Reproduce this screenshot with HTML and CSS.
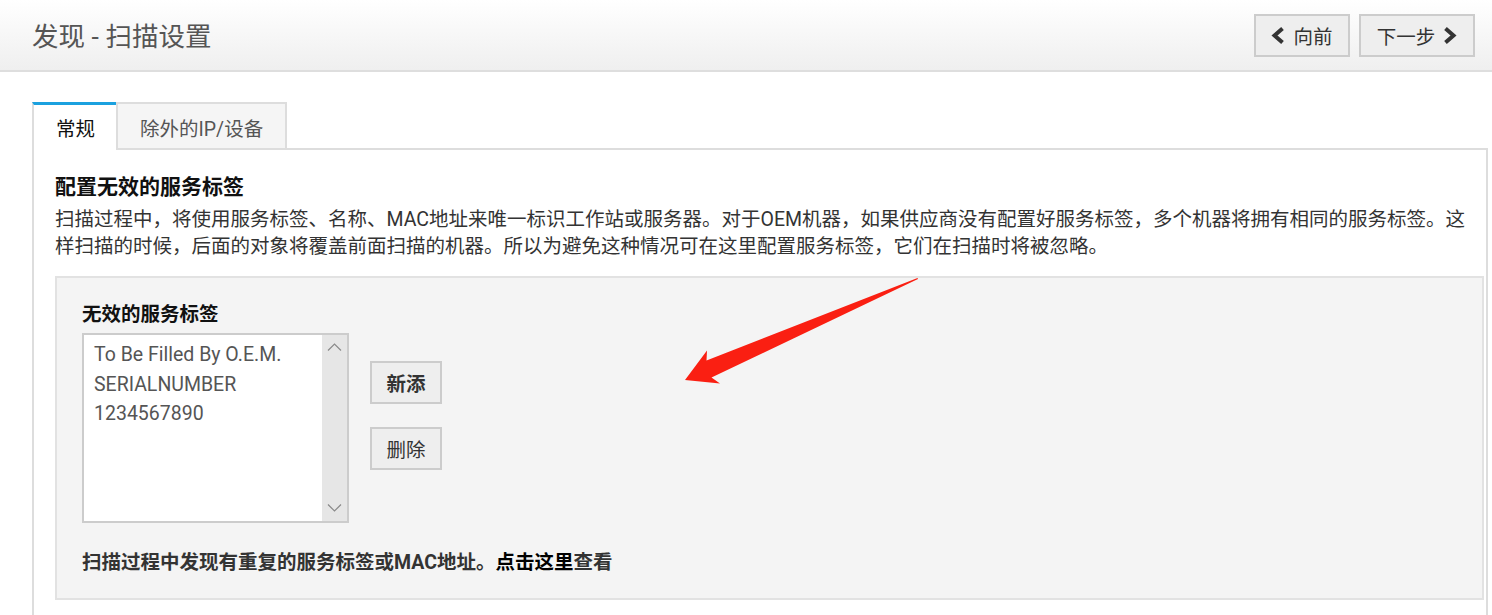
FILE: index.html
```html
<!DOCTYPE html>
<html lang="zh-CN">
<head>
<meta charset="utf-8">
<title>发现 - 扫描设置</title>
<link rel="stylesheet" href="styles.css">
</head>
<body>
<div class="header">
  <h1 class="title">发现 - 扫描设置</h1>
  <div class="nav">
    <button class="btn nav-btn prev"><svg class="chev" width="14" height="17" viewBox="0 0 14 17"><path d="M11.5 1.5 L3.5 8.5 L11.5 15.5" /></svg>向前</button>
    <button class="btn nav-btn next">下一步<svg class="chev" width="14" height="17" viewBox="0 0 14 17"><path d="M2.5 1.5 L10.5 8.5 L2.5 15.5" /></svg></button>
  </div>
</div>

<div class="main">
  <div class="tabs">
    <div class="tab active">常规</div>
    <div class="tab">除外的IP/设备</div>
  </div>
  <div class="panel">
    <h2 class="heading">配置无效的服务标签</h2>
    <p class="desc">扫描过程中，将使用服务标签、名称、MAC地址来唯一标识工作站或服务器。对于OEM机器，如果供应商没有配置好服务标签，多个机器将拥有相同的服务标签。这<br>样扫描的时候，后面的对象将覆盖前面扫描的机器。所以为避免这种情况可在这里配置服务标签，它们在扫描时将被忽略。</p>
    <div class="box">
      <div class="label">无效的服务标签</div>
      <div class="row">
        <div class="listbox">
          <div class="items">
            <div>To Be Filled By O.E.M.</div>
            <div>SERIALNUMBER</div>
            <div>1234567890</div>
          </div>
          <div class="scrollbar">
            <svg width="15" height="8" viewBox="0 0 15 8"><path d="M1 7.5 L7.5 1 L14 7.5" /></svg>
            <svg width="15" height="8" viewBox="0 0 15 8"><path d="M1 0.5 L7.5 7 L14 0.5" /></svg>
          </div>
        </div>
        <div class="actions">
          <button class="btn act-btn strong">新添</button>
          <button class="btn act-btn">删除</button>
        </div>
      </div>
      <div class="note">扫描过程中发现有重复的服务标签或MAC地址。<span class="link">点击这里</span>查看</div>
    </div>
  </div>
</div>

<svg class="arrow" width="245" height="118" viewBox="0 0 245 118">
  <polygon points="237.5,6 26.5,88.5 27,78.5 5,108 40,111.5 31.5,105.5 238,7" />
</svg>
</body>
</html>
```

FILE: styles.css
```css
html, body {
  margin: 0;
  padding: 0;
  overflow: hidden;
  background: #fff;
}

body {
  font-family: Roboto, "Noto Sans CJK SC", sans-serif;
  color: #333;
  position: relative;
}

.header {
  height: 70px;
  border-bottom: 2px solid #dedede;
  background: linear-gradient(#ffffff, #efefef);
  display: flex;
  align-items: flex-start;
}

.title {
  margin: 0;
  padding: 21px 0 0 32px;
  font-size: 26.5px;
  line-height: 32px;
  font-weight: normal;
  color: #555;
}

.nav {
  margin-left: auto;
  padding: 14px 17px 0 0;
  display: flex;
  gap: 9px;
}

.btn {
  box-sizing: border-box;
  border: 2px solid #cccccc;
  background: #eeeeee;
  font-family: Roboto, "Noto Sans CJK SC", sans-serif;
  font-size: 19.5px;
  color: #333;
  padding: 0;
  display: inline-flex;
  align-items: center;
  justify-content: center;
}

.nav-btn {
  height: 43px;
  gap: 8px;
}

.prev { width: 96px; }
.next { width: 116px; }

.chev path {
  fill: none;
  stroke: #333;
  stroke-width: 4;
}

.main {
  margin: 30px 4px 0 32px;
}

.tabs {
  display: flex;
  height: 48px;
  margin-bottom: -2px;
  position: relative;
  z-index: 1;
}

.tab {
  box-sizing: border-box;
  height: 48px;
  font-size: 19.5px;
  display: flex;
  align-items: center;
  padding-left: 22px;
  padding-top: 2px;
  color: #555;
  background: #f5f5f5;
  border: 2px solid #dddddd;
  width: 171px;
}

.tab.active {
  width: 84px;
  background: #fff;
  color: #111;
  border: none;
  border-top: 3px solid #1ba1df;
  border-left: 2px solid #dddddd;
  padding-top: 0;
}

.panel {
  border: 2px solid #dddddd;
  border-bottom: none;
  padding: 23px 2px 15px 21px;
}

.heading {
  margin: 0;
  font-size: 21px;
  line-height: 28px;
  font-weight: 700;
  color: #111;
}

.desc {
  margin: 5px 0 16px;
  font-size: 19.5px;
  line-height: 27px;
  color: #333;
  white-space: nowrap;
}

.box {
  border: 2px solid #e2e2e2;
  background: #f4f4f4;
  padding: 24px 25px 22px 25px;
}

.label {
  font-size: 19.5px;
  line-height: 26px;
  font-weight: 700;
  color: #111;
  margin-bottom: 5px;
}

.row {
  display: flex;
  gap: 21px;
}

.listbox {
  box-sizing: border-box;
  width: 267px;
  height: 190px;
  border: 2px solid #cccccc;
  background: #fff;
  display: flex;
}

.items {
  flex: 1;
  padding: 5px 0 0 10px;
  font-size: 19.5px;
  line-height: 29.5px;
  color: #555;
}

.scrollbar {
  width: 25px;
  background: #e6e6e6;
  display: flex;
  flex-direction: column;
  justify-content: space-between;
  align-items: center;
  padding: 8px 0 9px;
}

.scrollbar path {
  fill: none;
  stroke: #8a8a8a;
  stroke-width: 1.2;
}

.actions {
  display: flex;
  flex-direction: column;
  gap: 23px;
  padding-top: 28px;
}

.act-btn {
  width: 72px;
  height: 43px;
  color: #333;
}

.strong {
  font-weight: 700;
}

.note {
  margin-top: 27px;
  font-size: 19.5px;
  line-height: 26px;
  font-weight: 700;
  color: #333;
}

.link {
  color: #000;
}

.arrow {
  position: absolute;
  left: 680px;
  top: 272px;
  pointer-events: none;
}

.arrow polygon {
  fill: #fa1f12;
}
```
